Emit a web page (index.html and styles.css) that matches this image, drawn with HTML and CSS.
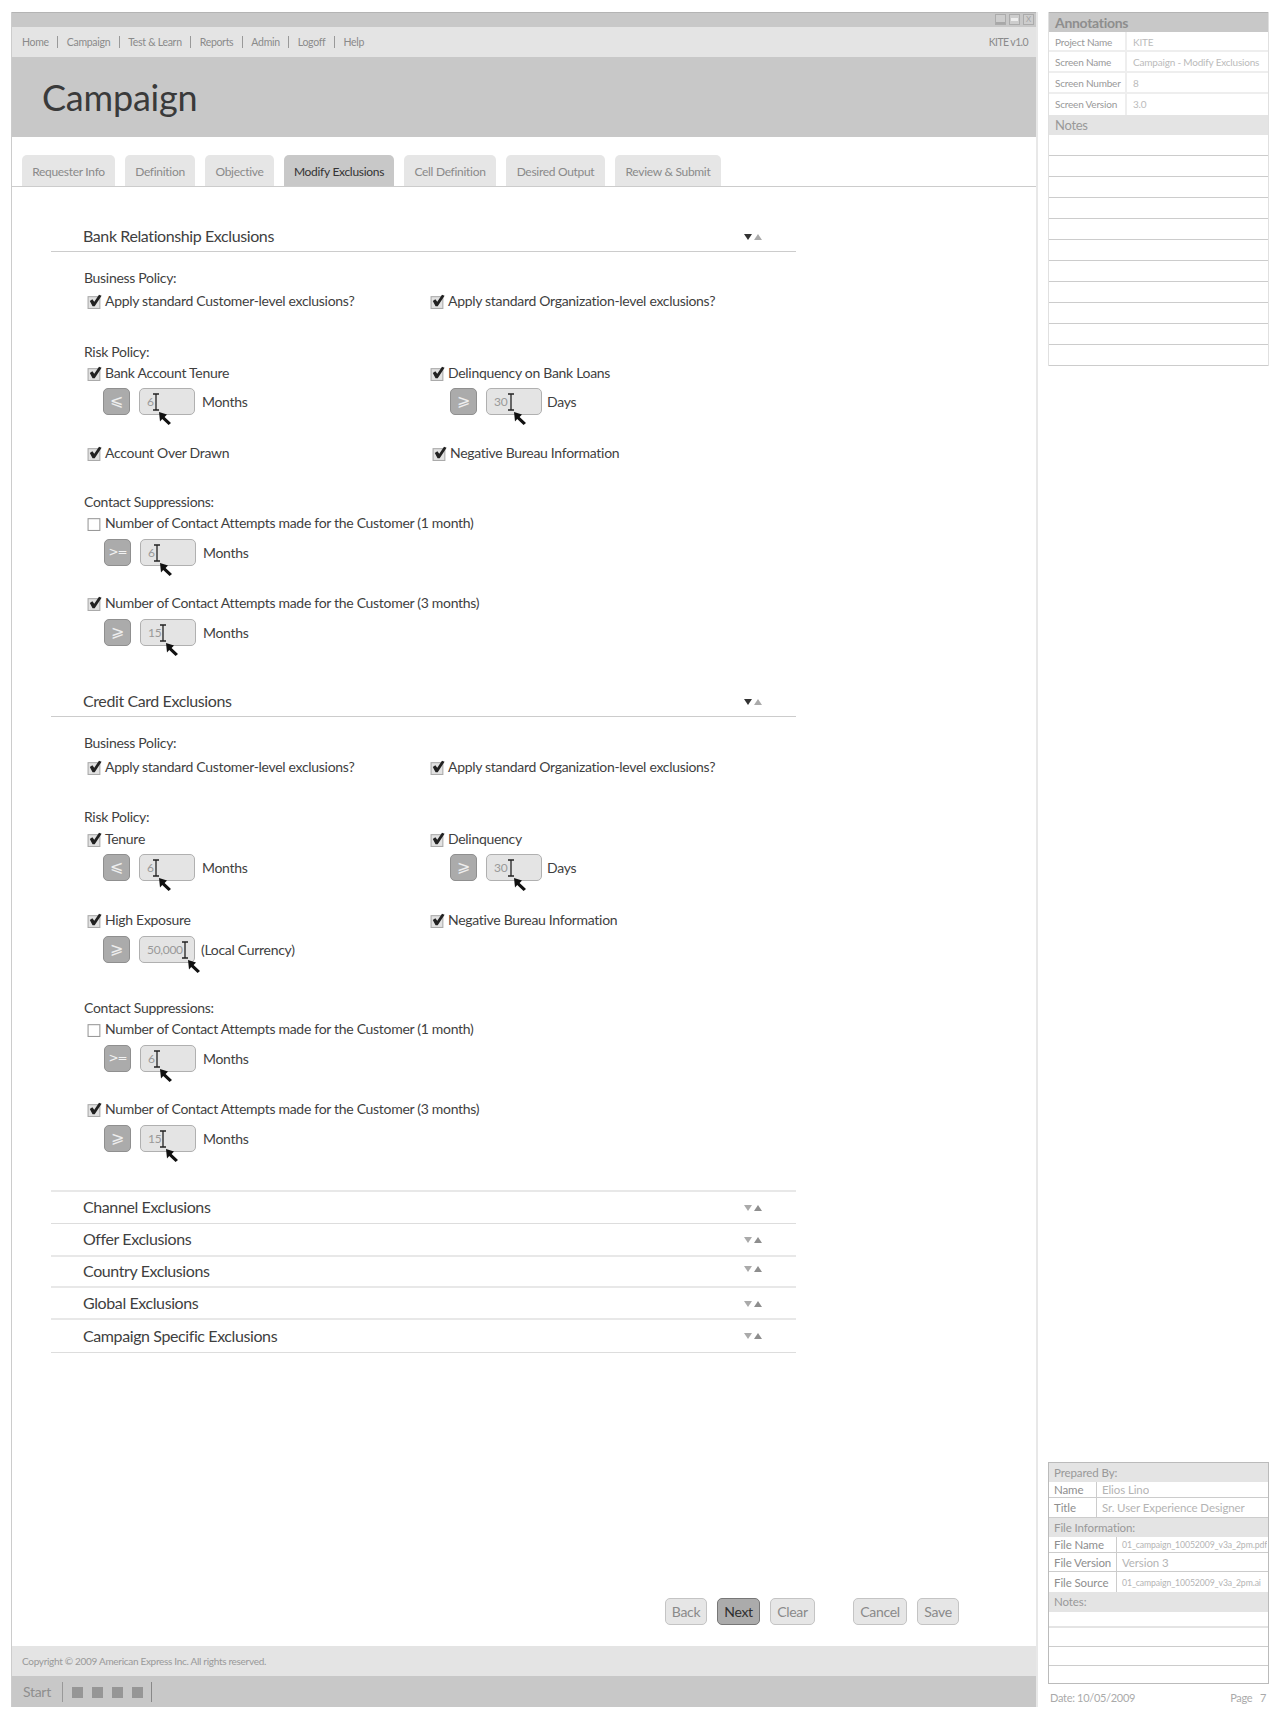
FILE: index.html
```html
<!DOCTYPE html>
<html>
<head>
<meta charset="utf-8" />
<title>Campaign - Modify Exclusions</title>
<link rel="stylesheet" href="styles.css">
</head>
<body>
<svg class="defs" width="0" height="0">
  <symbol id="tick" viewBox="0 0 14 14">
    <rect x="1" y="2.5" width="11" height="11" fill="#e2e2e2" stroke="#aaa" />
    <path d="M2.6 6.6 L5 5 L6.8 7.2 L11.2 0.6 L13.6 1.6 L7.2 11.4 L5.2 11.4 Z" fill="#222" />
  </symbol>
  <symbol id="untick" viewBox="0 0 14 14">
    <rect x="1" y="2.5" width="11" height="11" fill="#fff" stroke="#999" />
  </symbol>
  <symbol id="cursor" viewBox="0 0 20 32">
    <path d="M1 1 H7 M1 17 H7 M4 1 V17" fill="none" stroke="#222" stroke-width="1.3" />
    <path d="M7 19 L15 21.5 L12.6 24 L19 30 L16.6 32 L10.2 26 L8 28.6 Z" fill="#111" />
  </symbol>
  <symbol id="arrows" viewBox="0 0 18 8">
    <path class="arr-down" d="M0 1 H8 L4 7 Z" />
    <path class="arr-up" d="M10 7 H18 L14 1 Z" />
  </symbol>
</svg>

<div class="page">
  <div class="window">
    <div class="titlebar">
      <span class="winbtn winbtn-min"><i></i></span><span class="winbtn winbtn-max"><i></i></span><span class="winbtn winbtn-x">X</span>
    </div>
    <div class="nav">
      <ul class="nav-links">
        <li>Home</li><li>Campaign</li><li>Test &amp; Learn</li><li>Reports</li><li>Admin</li><li>Logoff</li><li>Help</li>
      </ul>
      <span class="version">KITE v1.0</span>
    </div>
    <div class="banner"><h1>Campaign</h1></div>
    <div class="tabs">
      <span class="tab">Requester Info</span>
      <span class="tab">Definition</span>
      <span class="tab">Objective</span>
      <span class="tab active">Modify Exclusions</span>
      <span class="tab">Cell Definition</span>
      <span class="tab">Desired Output</span>
      <span class="tab">Review &amp; Submit</span>
    </div>

    <div class="content">
      <div class="section first">
        <div class="sec-head"><span>Bank Relationship Exclusions</span><svg class="arrows open"><use href="#arrows" /></svg></div>
        <div class="label mt16">Business Policy:</div>
        <div class="cols mt4">
          <div class="check"><svg class="box"><use href="#tick" /></svg>Apply standard Customer-level exclusions?</div>
          <div class="check"><svg class="box"><use href="#tick" /></svg>Apply standard Organization-level exclusions?</div>
        </div>
        <div class="label mt30">Risk Policy:</div>
        <div class="cols mt2">
          <div>
            <div class="check"><svg class="box"><use href="#tick" /></svg>Bank Account Tenure</div>
            <div class="entry tight"><span class="op">⩽</span><span class="field">6<svg class="cursor"><use href="#cursor" /></svg></span><span class="unit">Months</span></div>
          </div>
          <div>
            <div class="check"><svg class="box"><use href="#tick" /></svg>Delinquency on Bank Loans</div>
            <div class="entry right tight"><span class="op">⩾</span><span class="field">30<svg class="cursor"><use href="#cursor" /></svg></span><span class="unit near">Days</span></div>
          </div>
        </div>
        <div class="cols mt29">
          <div class="check"><svg class="box"><use href="#tick" /></svg>Account Over Drawn</div>
          <div class="check nudge"><svg class="box"><use href="#tick" /></svg>Negative Bureau Information</div>
        </div>
        <div class="label mt28">Contact Suppressions:</div>
        <div class="check mt2"><svg class="box"><use href="#untick" /></svg>Number of Contact Attempts made for the Customer (1 month)</div>
        <div class="entry"><span class="op small">&gt;=</span><span class="field">6<svg class="cursor"><use href="#cursor" /></svg></span><span class="unit">Months</span></div>
        <div class="check mt28"><svg class="box"><use href="#tick" /></svg>Number of Contact Attempts made for the Customer (3 months)</div>
        <div class="entry"><span class="op">⩾</span><span class="field">15<svg class="cursor"><use href="#cursor" /></svg></span><span class="unit">Months</span></div>
      </div>

      <div class="section second">
        <div class="sec-head"><span>Credit Card Exclusions</span><svg class="arrows open"><use href="#arrows" /></svg></div>
        <div class="label mt16">Business Policy:</div>
        <div class="cols mt5">
          <div class="check"><svg class="box"><use href="#tick" /></svg>Apply standard Customer-level exclusions?</div>
          <div class="check"><svg class="box"><use href="#tick" /></svg>Apply standard Organization-level exclusions?</div>
        </div>
        <div class="label mt29">Risk Policy:</div>
        <div class="cols mt3">
          <div>
            <div class="check"><svg class="box"><use href="#tick" /></svg>Tenure</div>
            <div class="entry tight"><span class="op">⩽</span><span class="field">6<svg class="cursor"><use href="#cursor" /></svg></span><span class="unit">Months</span></div>
          </div>
          <div>
            <div class="check"><svg class="box"><use href="#tick" /></svg>Delinquency</div>
            <div class="entry right tight"><span class="op">⩾</span><span class="field">30<svg class="cursor"><use href="#cursor" /></svg></span><span class="unit near">Days</span></div>
          </div>
        </div>
        <div class="cols mt30">
          <div>
            <div class="check"><svg class="box"><use href="#tick" /></svg>High Exposure</div>
            <div class="entry"><span class="op">⩾</span><span class="field">50,000<svg class="cursor"><use href="#cursor" /></svg></span><span class="unit near">(Local Currency)</span></div>
          </div>
          <div class="check"><svg class="box"><use href="#tick" /></svg>Negative Bureau Information</div>
        </div>
        <div class="label mt35">Contact Suppressions:</div>
        <div class="check mt2"><svg class="box"><use href="#untick" /></svg>Number of Contact Attempts made for the Customer (1 month)</div>
        <div class="entry"><span class="op small">&gt;=</span><span class="field">6<svg class="cursor"><use href="#cursor" /></svg></span><span class="unit">Months</span></div>
        <div class="check mt28"><svg class="box"><use href="#tick" /></svg>Number of Contact Attempts made for the Customer (3 months)</div>
        <div class="entry"><span class="op">⩾</span><span class="field">15<svg class="cursor"><use href="#cursor" /></svg></span><span class="unit">Months</span></div>
      </div>

      <div class="folds">
        <div class="fold f1"><span>Channel Exclusions</span><svg class="arrows"><use href="#arrows" /></svg></div>
        <div class="fold f2"><span>Offer Exclusions</span><svg class="arrows"><use href="#arrows" /></svg></div>
        <div class="fold f3"><span>Country Exclusions</span><svg class="arrows up3"><use href="#arrows" /></svg></div>
        <div class="fold f4"><span>Global Exclusions</span><svg class="arrows down4"><use href="#arrows" /></svg></div>
        <div class="fold f5"><span>Campaign Specific Exclusions</span><svg class="arrows"><use href="#arrows" /></svg></div>
      </div>

      <div class="actions">
        <span class="btn w-back">Back</span>
        <span class="btn w-next primary">Next</span>
        <span class="btn w-clear">Clear</span>
        <span class="btn w-cancel push">Cancel</span>
        <span class="btn w-save">Save</span>
      </div>
    </div>

    <div class="copyright">Copyright © 2009 American Express Inc. All rights reserved.</div>
    <div class="taskbar">
      <span class="start">Start</span>
      <span class="task-icons"><i></i><i></i><i></i><i></i></span>
    </div>
  </div>

  <div class="side">
    <div class="notes-panel">
      <div class="panel-title">Annotations</div>
      <div class="a-row r1"><span class="a-key">Project Name</span><span class="a-val">KITE</span></div>
      <div class="a-row"><span class="a-key">Screen Name</span><span class="a-val">Campaign - Modify Exclusions</span></div>
      <div class="a-row"><span class="a-key">Screen Number</span><span class="a-val">8</span></div>
      <div class="a-row last"><span class="a-key">Screen Version</span><span class="a-val">3.0</span></div>
      <div class="panel-band">Notes</div>
      <div class="n-line"></div><div class="n-line"></div><div class="n-line"></div><div class="n-line"></div>
      <div class="n-line"></div><div class="n-line"></div><div class="n-line"></div><div class="n-line"></div>
      <div class="n-line"></div><div class="n-line"></div><div class="n-line"></div>
    </div>

    <div class="info">
      <div class="info-panel">
        <div class="i-band short">Prepared By:</div>
        <div class="i-row h16 who"><span class="i-key">Name</span><span class="i-val">Elios Lino</span></div>
        <div class="i-row h20 who"><span class="i-key">Title</span><span class="i-val">Sr. User Experience Designer</span></div>
        <div class="i-band short">File Information:</div>
        <div class="i-row h16"><span class="i-key">File Name</span><span class="i-val tiny">01_campaign_10052009_v3a_2pm.pdf</span></div>
        <div class="i-row h19"><span class="i-key">File Version</span><span class="i-val">Version 3</span></div>
        <div class="i-row h20 flat"><span class="i-key">File Source</span><span class="i-val tiny">01_campaign_10052009_v3a_2pm.ai</span></div>
        <div class="i-band">Notes:</div>
        <div class="i-line l1"></div><div class="i-line"></div><div class="i-line"></div><div class="i-line l4"></div>
      </div>
      <div class="stamp"><span>Date: 10/05/2009</span><span>Page &nbsp; 7</span></div>
    </div>
  </div>
</div>
</body>
</html>
```

FILE: styles.css
```css
*{
	box-sizing:border-box;
}
body{
	margin:0;
	background:#fff;
	color:#3f3f3f;
	font-family:Lato,"Liberation Sans",sans-serif;
	font-size:14px;
	letter-spacing:-0.3px;
}
.defs{
	position:absolute;
}
.page{
	display:flex;
	width:1280px;
	height:1716px;
	padding:12px 0 9px 11px;
}

/* window */
.window{
	display:flex;
	flex-direction:column;
	width:1027px;
	border-left:1px solid #ccc;
	border-right:2px solid #e8e8e8;
}
.titlebar{
	display:flex;
	justify-content:flex-end;
	gap:3px;
	height:15px;
	padding:1px 2px 0 0;
	background:#c8c8c8;
	border-top:1px solid #b4b4b4;
}
.winbtn{
	position:relative;
	width:11px;
	height:11px;
	background:#cdcdcd;
	border:1px solid #ababab;
	font-size:8px;
	line-height:8px;
	text-align:center;
	color:#a4a4a4;
	letter-spacing:0;
}
.winbtn-min i{
	position:absolute;
	left:0;
	right:0;
	bottom:0;
	height:2px;
	background:#a8a8a8;
}
.winbtn-max i{
	position:absolute;
	left:1px;
	top:3px;
	width:7px;
	height:3px;
	background:#eee;
}
.nav{
	display:flex;
	justify-content:space-between;
	align-items:center;
	height:30px;
	padding:0 8px 0 10px;
	background:#e4e4e4;
	color:#8a8a8a;
	font-size:10.5px;
}
.nav-links{
	display:flex;
	margin:0;
	padding:0;
	list-style:none;
}
.nav-links li{
	padding:0 8.5px;
	border-left:1px solid #999;
	line-height:12px;
}
.nav-links li:first-child{
	padding-left:0;
	border-left:0;
}
.version{
	letter-spacing:-0.6px;
}
.banner{
	height:80px;
	padding:18px 0 0 30px;
	background:#c8c8c8;
}
.banner h1{
	margin:0;
	font-size:36px;
	font-weight:400;
	line-height:44px;
	color:#3a3a3a;
	letter-spacing:-0.2px;
}
.tabs{
	display:grid;
	grid-template-columns:93px 70px 69px 110px 92px 99px 106px;
	gap:10px;
	height:50px;
	padding:18px 0 0 10px;
	border-bottom:1px solid #ccc;
}
.tab{
	height:31px;
	line-height:34px;
	background:#e6e6e6;
	border-radius:5px 5px 0 0;
	color:#8a8a8a;
	font-size:12px;
	letter-spacing:-0.3px;
	text-align:center;
	white-space:nowrap;
}
.tab.active{
	background:#c8c8c8;
	color:#333;
}

/* form */
.content{
	flex:1;
	display:flex;
	flex-direction:column;
}
.section{
	width:745px;
	margin-left:39px;
}
.section.first{
	margin-top:35px;
}
.section.second{
	margin-top:41px;
}
.sec-head{
	display:flex;
	justify-content:space-between;
	align-items:center;
	height:30px;
	padding:0 34px 2px 32px;
	border-bottom:1px solid #ccc;
	font-size:16px;
	letter-spacing:-0.4px;
}
.arrows{
	width:18px;
	height:8px;
	margin-top:2px;
}
.arr-down{
	fill:var(--down,#aaa);
}
.arr-up{
	fill:var(--up,#8e8e8e);
}
.arrows.open{
	--down:#333;
	--up:#aaa;
}
.label{
	height:20px;
	margin-left:33px;
	line-height:20px;
}
.check{
	display:flex;
	align-items:center;
	height:20px;
	padding-bottom:3px;
	margin-left:36px;
}
.cols .check{
	margin-left:0;
}
.box{
	width:15px;
	height:15px;
	margin:1px 3px 0 0;
	flex:none;
}
.cols{
	display:grid;
	grid-template-columns:343px 1fr;
	margin-left:36px;
}
.check.nudge{
	margin-left:2px;
}
.entry{
	display:flex;
	align-items:center;
	height:27px;
	margin:5px 0 0 53px;
}
.cols .entry{
	margin-left:16px;
}
.cols .entry.right{
	margin-left:20px;
}
.entry.tight{
	margin-top:4px;
}
.op{
	width:27px;
	height:27px;
	background:#ababab;
	border:1px solid #8f8f8f;
	border-radius:5px;
	color:#eee;
	font-family:"DejaVu Sans",sans-serif;
	font-size:16px;
	letter-spacing:0;
	line-height:24px;
	text-align:center;
}
.op.small{
	font-size:12px;
	letter-spacing:-1px;
	color:#f2f2f2;
}
.field{
	display:flex;
	align-items:flex-start;
	width:56px;
	height:27px;
	margin-left:9px;
	padding-left:7px;
	background:#e4e4e4;
	border:1px solid #b0b0b0;
	border-radius:5px;
	color:#999;
	font-size:12px;
	line-height:25px;
}
.cursor{
	width:20px;
	height:32px;
	margin:4px 0 0 -2px;
	overflow:visible;
	flex:none;
}
.right .cursor{
	margin-left:0;
}
.unit{
	margin-left:7px;
}
.unit.near{
	margin-left:6px;
}
.right .unit.near{
	margin-left:5px;
}
.mt2{margin-top:2px;}
.mt3{margin-top:3px;}
.mt4{margin-top:4px;}
.mt5{margin-top:5px;}
.mt16{margin-top:16px;}
.mt28{margin-top:28px;}
.mt29{margin-top:29px;}
.mt30{margin-top:30px;}
.mt35{margin-top:35px;}

/* collapsed sections */
.folds{
	width:745px;
	margin:38px 0 0 39px;
	border-bottom:1px solid #ddd;
}
.fold{
	display:flex;
	justify-content:space-between;
	align-items:center;
	padding:0 34px 2px 32px;
	border-top:2px solid #e8e8e8;
	font-size:16px;
	letter-spacing:-0.4px;
}
.f1{height:33px;}
.f2{height:32px;border-top:1px solid #ddd;}
.f3{height:31px;}
.f4{height:32px;}
.f5{height:34px;}
.up3{margin:0 0 3px;}
.down4{margin-top:4px;}

/* buttons */
.actions{
	display:flex;
	gap:10px;
	margin:auto 0 21px 653px;
}
.btn{
	height:27px;
	background:#e6e6e6;
	border:1px solid #c4c4c4;
	border-radius:5px;
	color:#8a8a8a;
	line-height:25px;
	text-align:center;
}
.btn.primary{
	background:#ababab;
	border-color:#777;
	color:#2f2f2f;
}
.btn.push{
	margin-left:28px;
}
.w-back{width:42px;}
.w-next{width:43px;}
.w-clear{width:45px;}
.w-cancel{width:54px;}
.w-save{width:42px;}

/* footer */
.copyright{
	height:30px;
	padding-left:10px;
	background:#e4e4e4;
	color:#999;
	font-size:10px;
	line-height:30px;
}
.taskbar{
	display:flex;
	align-items:center;
	height:31px;
	padding-left:11px;
	background:#c8c8c8;
}
.start{
	width:39px;
	color:#8e8e8e;
	font-size:14px;
}
.task-icons{
	display:flex;
	gap:9px;
	height:20px;
	padding:5px 8px 5px 9px;
	border-left:1px solid #999;
	border-right:1px solid #888;
}
.task-icons i{
	width:11px;
	height:11px;
	background:#969696;
}

/* annotations */
.side{
	display:flex;
	flex-direction:column;
	justify-content:space-between;
	width:221px;
	margin-left:10px;
}
.notes-panel{
	border:solid #e0e0e0;
	border-width:0 1px;
}
.panel-title{
	height:20px;
	padding-left:6px;
	background:#c8c8c8;
	border-top:1px solid #b4b4b4;
	color:#8e8e8e;
	font-size:14px;
	font-weight:700;
	line-height:19px;
}
.a-row{
	display:flex;
	height:21px;
	border-bottom:2px solid #eee;
	font-size:10px;
	letter-spacing:-0.2px;
	line-height:20px;
}
.a-row.r1{
	height:20px;
}
.a-row.last{
	border-bottom:0;
}
.a-key{
	width:78px;
	padding-left:6px;
	border-right:2px solid #eee;
	color:#999;
	white-space:nowrap;
}
.a-val{
	padding-left:6px;
	color:#bbb;
	white-space:nowrap;
}
.panel-band{
	height:20px;
	padding-left:6px;
	background:#e4e4e4;
	color:#999;
	font-size:13px;
	line-height:20px;
}
.n-line{
	height:21px;
	border-bottom:1px solid #ccc;
}

/* info box */
.info-panel{
	border:1px solid #bbb;
}
.i-band{
	height:20px;
	padding-left:5px;
	background:#e4e4e4;
	color:#999;
	font-size:11.5px;
	letter-spacing:-0.1px;
	line-height:19px;
}
.i-band.short{
	height:19px;
}
.i-row{
	display:flex;
	align-items:center;
	border-bottom:1px solid #ccc;
	font-size:11.5px;
	letter-spacing:-0.1px;
}
.i-row.flat{
	border-bottom:0;
}
.h16{height:16px;}
.h19{height:19px;}
.h20{height:20px;}
.i-key{
	display:flex;
	align-items:center;
	align-self:stretch;
	width:68px;
	padding-left:5px;
	border-right:1px solid #ccc;
	color:#8e8e8e;
	white-space:nowrap;
}
.who .i-key{
	width:48px;
}
.i-val{
	padding-left:5px;
	color:#b4b4b4;
	white-space:nowrap;
	overflow:hidden;
}
.i-val.tiny{
	font-size:8.7px;
}
.i-line{
	height:19px;
	border-bottom:1px solid #ccc;
}
.i-line.l1{
	height:16px;
	border-bottom:2px solid #e4e4e4;
}
.i-line.l4{
	height:17px;
	border-bottom:0;
}
.stamp{
	display:flex;
	justify-content:space-between;
	height:23px;
	padding:0 3px 0 2px;
	color:#aaa;
	font-size:11px;
	line-height:28px;
}
```
